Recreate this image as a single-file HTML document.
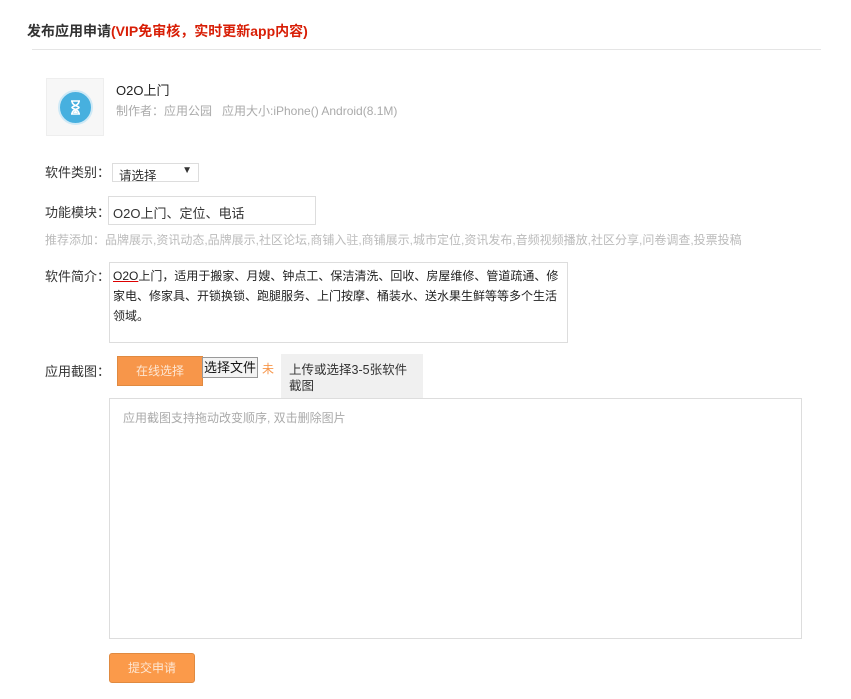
<!DOCTYPE html>
<html><head><meta charset="utf-8"><style>
*{margin:0;padding:0;box-sizing:border-box}
body{width:851px;height:699px;background:#fff;position:relative;font-family:"Liberation Sans","Noto Sans CJK SC",sans-serif;font-size:12px;color:#333;overflow:hidden}
.a{position:absolute;white-space:nowrap}
.lab{font-size:13px;color:#333}
</style></head><body>
<div class="a" style="left:27px;top:21px;font-size:14px;font-weight:bold;color:#333">发布应用申请<span style="color:#d81e06">(VIP免审核，实时更新app内容)</span></div>
<div class="a" style="left:32px;top:49px;width:789px;height:1px;background:#e5e5e5"></div>
<div class="a" style="left:46px;top:78px;width:58px;height:58px;border:1px solid #eee;background:#f7f7f7"></div>
<div class="a" style="left:58px;top:90px;width:35px;height:35px;border-radius:50%;background:#47b0df;border:2px solid #cfe9f6"></div>
<svg class="a" style="left:66px;top:98px" width="19" height="19" viewBox="0 0 19 19"><path d="M5 3h9M5 16h9M6 3c0 5 7 5 7 6.5S6 11 6 16h7c0-5-7-5-7-6.5S13 8 13 3" fill="none" stroke="#fff" stroke-width="1.6"/><path d="M7 15l2.5-3 2.5 3z" fill="#fff"/></svg>
<div class="a" style="left:116px;top:80px;font-size:13px;color:#222">O2O上门</div>
<div class="a" style="left:116px;top:102px;color:#aaa">制作者：应用公园&nbsp;&nbsp;&nbsp;应用大小:iPhone() Android(8.1M)</div>
<div class="a lab" style="left:45px;top:162px">软件类别：</div>
<div class="a" style="left:112px;top:163px;width:87px;height:19px;border:1px solid #ddd;padding:1px 6px;font-size:12.5px">请选择<span style="position:absolute;right:6px;top:1px;font-size:10px">▼</span></div>
<div class="a lab" style="left:45px;top:202px">功能模块：</div>
<div class="a" style="left:108px;top:196px;width:208px;height:29px;border:1px solid #ddd;padding:6px 4px;font-size:13px">O2O上门、定位、电话</div>
<div class="a" style="left:45px;top:231px;color:#bbb">推荐添加：品牌展示,资讯动态,品牌展示,社区论坛,商铺入驻,商铺展示,城市定位,资讯发布,音频视频播放,社区分享,问卷调查,投票投稿</div>
<div class="a lab" style="left:45px;top:266px">软件简介：</div>
<div class="a" style="left:109px;top:262px;width:459px;height:81px;border:1px solid #ddd;padding:3px 3px;font-size:12px;line-height:20px;color:#222;overflow:hidden"><span style="text-decoration:underline;text-decoration-color:#d00">O2O</span>上门，适用于搬家、月嫂、钟点工、保洁清洗、回收、房屋维修、管道疏通、修<br>家电、修家具、开锁换锁、跑腿服务、上门按摩、桶装水、送水果生鲜等等多个生活<br>领域。</div>
<div class="a lab" style="left:45px;top:361px">应用截图：</div>
<div class="a" style="left:117px;top:356px;width:86px;height:30px;background:#f7964a;border:1px solid #e08a40;color:#fde6d2;text-align:center;line-height:28px">在线选择</div>
<div class="a" style="left:202px;top:357px;width:56px;height:21px;border:1px solid #999;background:#f3f3f3;color:#111;font-size:13px;text-align:center;line-height:19px">选择文件</div>
<div class="a" style="left:262px;top:360px;color:#f7964a">未</div>
<div class="a" style="left:281px;top:354px;width:142px;height:45px;background:#f0f0f0;padding:8px 8px;font-size:12.5px;line-height:16px;white-space:normal;color:#333">上传或选择3-5张软件截图</div>
<div class="a" style="left:109px;top:398px;width:693px;height:241px;border:1px solid #ddd"></div>
<div class="a" style="left:123px;top:409px;color:#aaa">应用截图支持拖动改变顺序, 双击删除图片</div>
<div class="a" style="left:109px;top:653px;width:86px;height:30px;background:#fb9a4a;border:1px solid #e08a40;border-radius:3px;color:#fde6d2;text-align:center;line-height:28px">提交申请</div>
</body></html>
